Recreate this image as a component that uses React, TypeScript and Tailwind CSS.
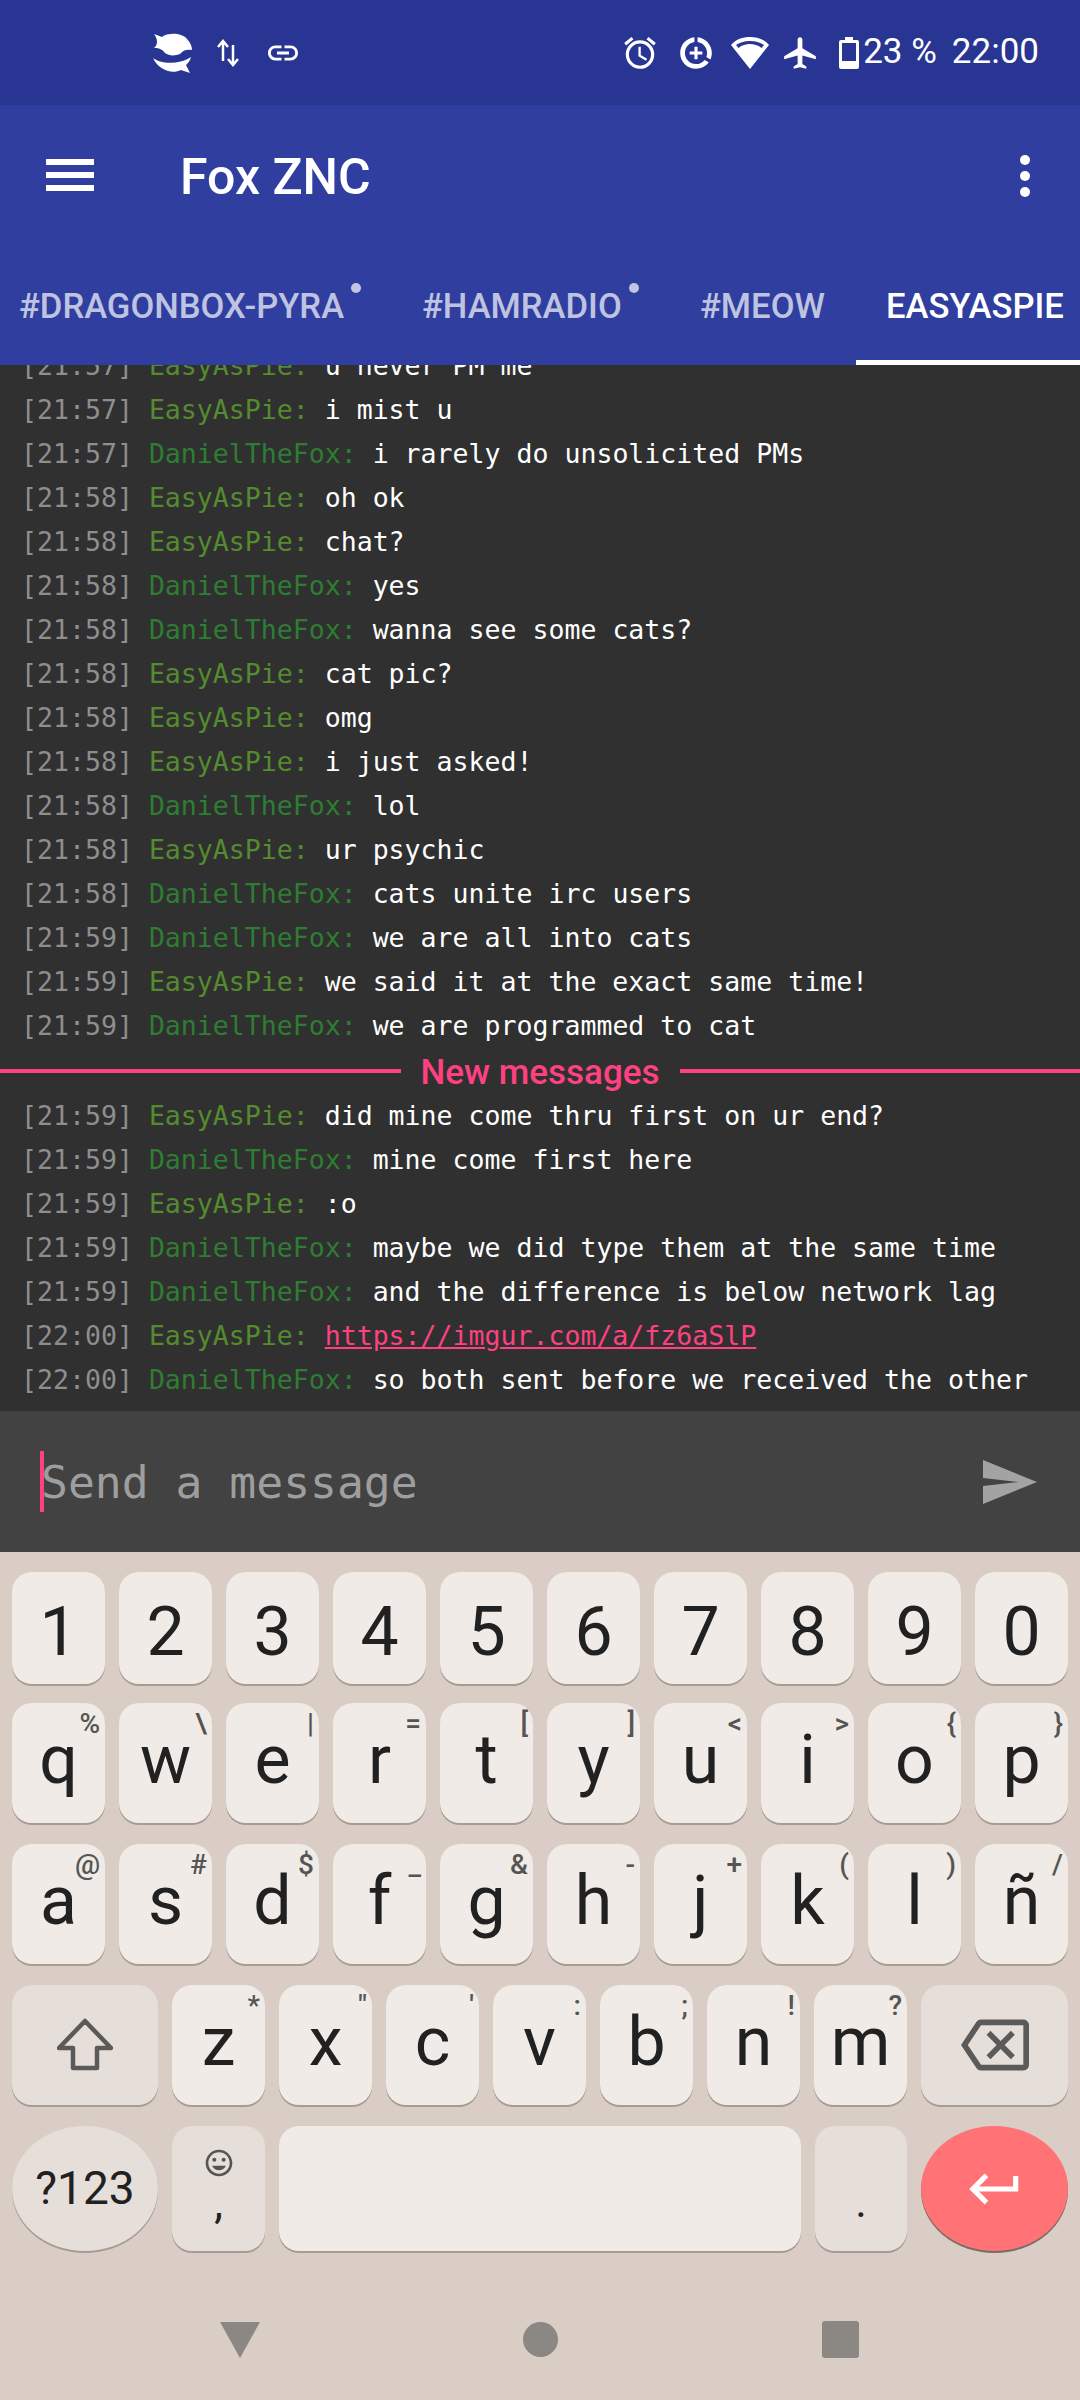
import React from 'react';
import {
  MdOutlineAccessAlarm,
  MdDataSaverOn,
  MdAirplanemodeActive,
  MdLink,
  MdKeyboardReturn,
  MdOutlineBackspace,
  MdOutlineTagFaces,
} from 'react-icons/md';

const EASY = 'EasyAsPie';
const DANIEL = 'DanielTheFox';

const before: [string, string, string][] = [
  ['21:57', EASY, 'u never PM me'],
  ['21:57', EASY, 'i mist u'],
  ['21:57', DANIEL, 'i rarely do unsolicited PMs'],
  ['21:58', EASY, 'oh ok'],
  ['21:58', EASY, 'chat?'],
  ['21:58', DANIEL, 'yes'],
  ['21:58', DANIEL, 'wanna see some cats?'],
  ['21:58', EASY, 'cat pic?'],
  ['21:58', EASY, 'omg'],
  ['21:58', EASY, 'i just asked!'],
  ['21:58', DANIEL, 'lol'],
  ['21:58', EASY, 'ur psychic'],
  ['21:58', DANIEL, 'cats unite irc users'],
  ['21:59', DANIEL, 'we are all into cats'],
  ['21:59', EASY, 'we said it at the exact same time!'],
  ['21:59', DANIEL, 'we are programmed to cat'],
];

const after: [string, string, string][] = [
  ['21:59', EASY, 'did mine come thru first on ur end?'],
  ['21:59', DANIEL, 'mine come first here'],
  ['21:59', EASY, ':o'],
  ['21:59', DANIEL, 'maybe we did type them at the same time'],
  ['21:59', DANIEL, 'and the difference is below network lag'],
  ['22:00', EASY, 'https://imgur.com/a/fz6aSlP'],
  ['22:00', DANIEL, 'so both sent before we received the other'],
];

const row2 = [['q', '%'], ['w', '\\'], ['e', '|'], ['r', '='], ['t', '['], ['y', ']'], ['u', '<'], ['i', '>'], ['o', '{'], ['p', '}']];
const row3 = [['a', '@'], ['s', '#'], ['d', '$'], ['f', '_'], ['g', '&'], ['h', '-'], ['j', '+'], ['k', '('], ['l', ')'], ['ñ', '/']];
const row4 = [['z', '*'], ['x', '"'], ['c', "'"], ['v', ':'], ['b', ';'], ['n', '!'], ['m', '?']];

const ChatLine = ({ line }: { line: [string, string, string] }) => {
  const [time, nick, text] = line;
  const isLink = text.startsWith('https://');
  return (
    <div className="h-[44px] pl-[21px] leading-[44px] whitespace-pre">
      <span className="text-[#8e8e8e]">[{time}] </span>
      <span className={nick === EASY ? 'text-[#558b2f]' : 'text-[#2e7d32]'}>{nick}: </span>
      <span className={isLink ? 'text-[#ff4081] underline' : 'text-white'}>{text}</span>
    </div>
  );
};

const Key = ({ label, hint, className }: { label: string; hint?: string; className: string }) => (
  <div className={`relative flex-1 flex justify-center rounded-[20px] bg-[#f0ebe6] shadow-[0_2px_0_#a79c93] text-[68px] leading-[68px] text-[#212121] ${className}`}>
    {label}
    {hint && <span className="absolute top-[7px] right-[5px] text-[28px] leading-[27px] font-medium text-[#555555]">{hint}</span>}
  </div>
);

const App = () => {
  return (
    <div className="w-[1080px] h-[2400px] flex flex-col overflow-hidden bg-[#dacdc5] font-['Roboto',sans-serif]">
      {/* Status bar */}
      <div className="h-[105px] shrink-0 flex items-center justify-between bg-[#283593] text-white pl-[153px] pr-[41px]">
        <div className="flex items-center">
          <svg width="40" height="40" viewBox="0 0 40 40" fill="white">
            <path d="M1 1 L9 4 C14 0 28 -1 34 6 C37 9 39 13 39 17 C34 16 30 17 27 21 C22 23 16 23 12 20 C10 17 7 15 1 15 C5 12 5 6 1 1 Z" />
            <path d="M0 25 C6 30 24 33 38 24 C37 28 35 30 33 32 L37 40 L28 37 C18 42 5 36 0 25 Z" />
          </svg>
          <svg width="22" height="28" viewBox="0 0 22 28" fill="none" stroke="white" strokeWidth="2.5" className="ml-[24px]">
            <path d="M6 22 V3 M1 8 L6 2 L11 8" />
            <path d="M16 6 V25 M11 20 L16 26 L21 20" />
          </svg>
          <MdLink size={36} className="ml-[26px]" />
        </div>
        <div className="flex items-center">
          <MdOutlineAccessAlarm size={38} />
          <MdDataSaverOn size={38} className="ml-[18px]" />
          <svg width="38" height="32" viewBox="0 0 38 32" fill="white" className="ml-[16px]">
            <path d="M19 0 C26 0 33 2 38 8 L19 32 L0 8 C5 2 12 0 19 0 Z M19 4 C13 4 8 6 5 8 L7.5 11 C11 8 15 7 19 7 C23 7 27 8 30.5 11 L33 8 C30 6 25 4 19 4 Z" fillRule="evenodd" />
          </svg>
          <MdAirplanemodeActive size={38} className="ml-[12px]" />
          <svg width="20" height="32" viewBox="0 0 20 32" className="ml-[20px]">
            <path fillRule="evenodd" fill="white" d="M6 0 H14 V3 H18 Q20 3 20 5 V30 Q20 32 18 32 H2 Q0 32 0 30 V5 Q0 3 2 3 H6 Z M3 6 V24 H17 V6 Z" />
          </svg>
          <span className="ml-[4px] text-[35px]">23 %</span>
          <span className="ml-[15px] text-[35px]">22:00</span>
        </div>
      </div>

      {/* Toolbar */}
      <div className="h-[147px] shrink-0 flex items-start bg-[#303f9f] text-white pl-[46px] pr-[50px] pt-[38px]">
        <div className="flex flex-col gap-[7px] w-[48px] mt-[16px]">
          <div className="h-[6px] bg-white" />
          <div className="h-[6px] bg-white" />
          <div className="h-[6px] bg-white" />
        </div>
        <div className="ml-[86px] mt-[1px] text-[50px] leading-[66px] font-medium">Fox ZNC</div>
        <div className="ml-auto flex flex-col gap-[6px] mt-[12px]">
          <div className="w-[10px] h-[10px] rounded-full bg-white" />
          <div className="w-[10px] h-[10px] rounded-full bg-white" />
          <div className="w-[10px] h-[10px] rounded-full bg-white" />
        </div>
      </div>

      {/* Tabs */}
      <div className="h-[113px] shrink-0 flex bg-[#303f9f] text-[34.6px] font-medium text-white/70 whitespace-nowrap">
        <div className="relative ml-[19px] mt-[29px] w-[327px]">
          #DRAGONBOX-PYRA
          <span className="absolute top-[2px] right-[-15px] w-[10px] h-[10px] rounded-full bg-white/70" />
        </div>
        <div className="relative ml-[76px] mt-[29px] w-[201px]">
          #HAMRADIO
          <span className="absolute top-[2px] right-[-16px] w-[10px] h-[10px] rounded-full bg-white/70" />
        </div>
        <div className="ml-[77px] mt-[29px] w-[125px]">#MEOW</div>
        <div className="ml-[31px] w-[224px] pl-[30px] pt-[29px] text-white border-b-[5px] border-white">EASYASPIE</div>
      </div>

      {/* Messages */}
      <div className="flex-1 min-h-0 overflow-hidden flex flex-col justify-end pb-[9px] bg-[#303030] text-[26.55px] font-['DejaVu_Sans_Mono',monospace]">
        {before.map((l, i) => (
          <ChatLine key={i} line={l} />
        ))}
        <div className="h-[46px] flex items-center text-[#ff4081] font-['Roboto',sans-serif]">
          <div className="flex-1 h-[4px] bg-[#ff4081]" />
          <span className="px-[20px] pt-[3px] text-[35px] font-medium leading-[46px]">New messages</span>
          <div className="flex-1 h-[4px] bg-[#ff4081]" />
        </div>
        {after.map((l, i) => (
          <ChatLine key={i} line={l} />
        ))}
      </div>

      {/* Input */}
      <div className="h-[141px] shrink-0 flex items-center bg-[#424242] pl-[40px] pr-[43px]">
        <div className="w-[4px] h-[61px] bg-[#ff4081]" />
        <div className="-ml-[3px] pt-[4px] text-[44.7px] text-[#9e9e9e] font-['DejaVu_Sans_Mono',monospace]">Send a message</div>
        <svg width="54" height="44" viewBox="0 0 54 44" fill="#a3a3a3" className="ml-auto">
          <path d="M0 0 L54 22 L0 44 V26 L36 22 L0 18 Z" />
        </svg>
      </div>

      {/* Keyboard */}
      <div className="shrink-0 px-[12px] pt-[20px] flex flex-col">
        <div className="flex gap-[14px] h-[112px]">
          {['1', '2', '3', '4', '5', '6', '7', '8', '9', '0'].map((n) => (
            <Key key={n} label={n} className="pt-[26px]" />
          ))}
        </div>
        <div className="flex gap-[14px] h-[120px] mt-[19px]">
          {row2.map(([l, h]) => (
            <Key key={l} label={l} hint={h} className="pt-[23px]" />
          ))}
        </div>
        <div className="flex gap-[14px] h-[120px] mt-[21px]">
          {row3.map(([l, h]) => (
            <Key key={l} label={l} hint={h} className="pt-[23px]" />
          ))}
        </div>
        <div className="flex gap-[14px] h-[120px] mt-[21px]">
          <div className="w-[146px] shrink-0 flex items-center justify-center rounded-[20px] bg-[#e6dfd9] shadow-[0_2px_0_#a79c93]">
            <svg width="56" height="54" viewBox="0 0 56 54" fill="none" stroke="#5a5a5a" strokeWidth="4.5" strokeLinejoin="round">
              <path d="M28 3 L54 30 H40 V50 H16 V30 H2 Z" />
            </svg>
          </div>
          {row4.map(([l, h]) => (
            <Key key={l} label={l} hint={h} className="pt-[23px]" />
          ))}
          <div className="w-[147px] shrink-0 flex items-center justify-center rounded-[20px] bg-[#e6dfd9] shadow-[0_2px_0_#a79c93] text-[#5a5a5a]">
            <MdOutlineBackspace size={68} />
          </div>
        </div>
        <div className="flex gap-[14px] h-[125px] mt-[21px]">
          <div className="w-[146px] shrink-0 flex items-center justify-center rounded-[50%] bg-[#e6dfd9] shadow-[0_2px_0_#a79c93] text-[46px] text-[#212121]">?123</div>
          <div className="w-[93px] shrink-0 relative flex flex-col items-center rounded-[20px] bg-[#e6dfd9] shadow-[0_2px_0_#a79c93] text-[#212121]">
            <MdOutlineTagFaces size={32} className="mt-[21px] text-[#555555]" />
            <span className="text-[44px] leading-[44px] mt-[2px]">,</span>
          </div>
          <div className="flex-1 rounded-[20px] bg-[#f0ebe6] shadow-[0_2px_0_#a79c93]" />
          <div className="w-[92px] shrink-0 flex justify-center rounded-[20px] bg-[#e6dfd9] shadow-[0_2px_0_#a79c93] text-[44px] leading-[44px] pt-[54px] text-[#212121]">.</div>
          <div className="w-[147px] shrink-0 flex items-center justify-center rounded-[50%] bg-[#ff7377] shadow-[0_2px_0_#7b6a66] text-white">
            <MdKeyboardReturn size={62} />
          </div>
        </div>
      </div>

      {/* Nav bar */}
      <div className="flex-none h-[149px] grid grid-cols-3 items-center px-[90px] pt-[28px]">
        <div className="flex justify-center">
          <svg width="42" height="36" viewBox="0 0 42 36" fill="#8b8783">
            <path d="M1 0 H41 L21 36 Z" />
          </svg>
        </div>
        <div className="flex justify-center">
          <div className="w-[35px] h-[35px] rounded-full bg-[#8b8783]" />
        </div>
        <div className="flex justify-center">
          <div className="w-[37px] h-[37px] rounded-[3px] bg-[#8b8783]" />
        </div>
      </div>
    </div>
  );
};

export default App;
